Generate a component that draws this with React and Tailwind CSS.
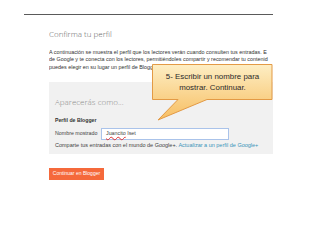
const Callout = () => (
  <div className="absolute left-[151px] top-[63px] w-[123px] h-[60px]">
    <svg width="123" height="60" viewBox="0 0 123 60" className="absolute left-0 top-0">
      <defs>
        <linearGradient id="cg" x1="0" y1="0" x2="0" y2="1">
          <stop offset="0" stopColor="#fdeec4" />
          <stop offset="1" stopColor="#f7be62" />
        </linearGradient>
      </defs>
      <path
        d="M1.5 1.5 H121 V36.5 H56 L7 57 L27 36.5 H1.5 Z"
        fill="url(#cg)"
        stroke="#e39a45"
        strokeWidth="1"
      />
    </svg>
    <div className="relative h-[37px] flex flex-col items-center justify-center text-[7.9px] leading-[11px] text-[#2a2a2a] font-['Liberation_Sans',Arial,sans-serif]">
      <span>5- Escribir un nombre para</span>
      <span>mostrar. Continuar.</span>
    </div>
  </div>
);

export default function App() {
  return (
    <div className="relative w-[320px] h-[240px] bg-white overflow-hidden font-['Liberation_Sans',Arial,sans-serif]">
      <div className="pt-[14px] pl-[24px]">
        <div className="w-[249px] h-px bg-[#5a5a5a]" />
      </div>

      <div className="ml-[49px] w-[224px] overflow-hidden">
        <h1 className="mt-[13px] text-[8px] leading-[12px] text-[#666] font-['Open_Sans',sans-serif] font-light whitespace-nowrap">
          Confirma tu perfil
        </h1>
        <div className="mt-[9px] text-[5.4px] leading-[7.3px] text-[#333] whitespace-nowrap">
          <p>A continuación se muestra el perfil que los lectores verán cuando consulten tus entradas. E</p>
          <p>de Google y te conecta con los lectores, permitiéndoles compartir y recomendar tu contenid</p>
          <p>puedes elegir en su lugar un perfil de Blogger limitado. Más información sobre los perfiles</p>
        </div>

        <div className="mt-[11px] h-[72px] bg-[#f1f1f1] pl-[6px] pt-[14px]">
          <div className="text-[8px] leading-[12px] text-[#8a8a8a] font-['Open_Sans',sans-serif] font-light">
            Aparecerás como...
          </div>
          <div className="mt-[9px] text-[5.2px] leading-[7px] font-bold text-[#333]">Perfil de Blogger</div>
          <div className="mt-[4px] flex items-center text-[5.3px] text-[#444]">
            <span className="w-[46px] whitespace-nowrap">Nombre mostrado</span>
            <div className="w-[128px] h-[12px] bg-white border border-[#aac3ea] flex items-center pl-[4px]">
              <span className="underline decoration-wavy decoration-[#e03030] decoration-[0.5px]">Juancito</span>
              <span className="ml-[1.5px]">Iset</span>
            </div>
          </div>
          <div className="mt-[2px] text-[5.5px] leading-[7px] text-[#444] whitespace-nowrap">
            Comparte tus entradas con el mundo de Google+. <span className="text-[#3a93b8]">Actualizar a un perfil de Google+</span>
          </div>
        </div>

        <button className="mt-[14px] w-[55px] h-[12px] bg-[#f5693b] text-white text-[5px] flex items-center justify-center">
          Continuar en Blogger
        </button>
      </div>

      <Callout />
    </div>
  );
}
